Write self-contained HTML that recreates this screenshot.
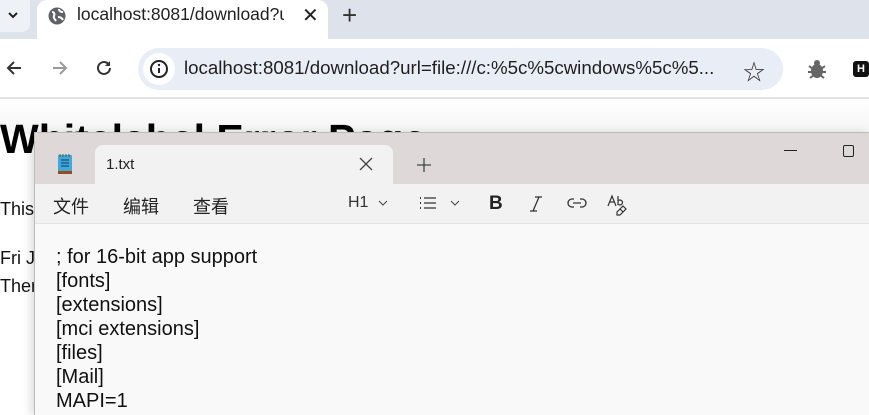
<!DOCTYPE html>
<html><head><meta charset="utf-8"><style>
*{margin:0;padding:0;box-sizing:border-box}
body{width:869px;height:415px;overflow:hidden;background:#fff;font-family:"Liberation Sans","Noto Sans CJK SC",sans-serif;position:relative}
.abs{position:absolute}
</style></head><body>
<div class="abs" style="left:0;top:0;width:869px;height:39px;background:#dee3eb"></div>
<div class="abs" style="left:0;top:0;width:30px;height:32px;background:#eef1f5;border-radius:0 0 8px 0"></div>
<svg class="abs" style="left:7px;top:9px" width="12" height="12"><path d="M2 4l4 4 4-4" stroke="#222" stroke-width="2" fill="none"/></svg>
<div class="abs" style="left:37px;top:0;width:291px;height:40px;background:#fff;border-radius:10px 10px 0 0"></div>
<svg class="abs" style="left:47px;top:6px" width="20" height="20"><circle cx="10" cy="10" r="8.5" fill="#5f6368"/><path d="M5 6c2 0 3 2 2 4s1 3 2 5M12 3c0 2 2 3 4 3M11 11c2 0 4 1 5 3" stroke="#fff" stroke-width="2" fill="none"/></svg>
<div class="abs" style="left:77px;top:4px;font-size:17.5px;color:#1f1f1f;white-space:nowrap;width:207px;overflow:hidden">localhost:8081/download?url</div>
<div class="abs" style="left:302px;top:3px;font-size:20px;color:#222">✕</div>
<div class="abs" style="left:342px;top:0px;font-size:26px;color:#333">+</div>
<svg class="abs" style="left:5px;top:59px" width="18" height="18"><path d="M16 9H3M9 3L3 9l6 6" stroke="#333" stroke-width="2" fill="none"/></svg>
<svg class="abs" style="left:51px;top:59px" width="18" height="18"><path d="M2 9h13M9 3l6 6-6 6" stroke="#999" stroke-width="2" fill="none"/></svg>
<svg class="abs" style="left:95px;top:59px" width="18" height="18"><path d="M15 9a6 6 0 1 1-2-4.5" stroke="#333" stroke-width="2" fill="none"/><path d="M15 2v5h-5z" fill="#333"/></svg>
<div class="abs" style="left:138px;top:48px;width:645px;height:42px;background:#e9eef6;border-radius:21px"></div>
<div class="abs" style="left:143px;top:53px;width:32px;height:32px;background:#fff;border-radius:16px"></div>
<svg class="abs" style="left:149px;top:59px" width="20" height="20"><circle cx="10" cy="10" r="8" stroke="#222" stroke-width="2" fill="none"/><path d="M10 9v5" stroke="#222" stroke-width="2"/><circle cx="10" cy="6" r="1.2" fill="#222"/></svg>
<div class="abs" style="left:184px;top:57px;font-size:18.7px;color:#1f1f1f;white-space:nowrap">localhost:8081/download?url=file:///c:%5c%5cwindows%5c%5...</div>
<div class="abs" style="left:743px;top:55px;font-size:22px;color:#333">☆</div>
<svg class="abs" style="left:806px;top:58px" width="22" height="22"><ellipse cx="11" cy="13" rx="6" ry="7" fill="#666"/><circle cx="11" cy="5" r="3" fill="#666"/><path d="M3 8l4 3M19 8l-4 3M2 14h5M20 14h-5M4 20l4-3M18 20l-4-3" stroke="#666" stroke-width="2"/></svg>
<div class="abs" style="left:853px;top:61px;width:16px;height:16px;background:#111;border-radius:3px;color:#fff;font-size:11px;font-weight:bold;padding-left:4px;line-height:16px">H</div>
<div class="abs" style="left:0;top:97px;width:869px;height:2px;background:#e2e2e2"></div>
<div class="abs" style="left:0;top:99px;width:869px;height:35px;background:linear-gradient(#fff,#f4f4f4)"></div>
<div class="abs" style="left:0;top:116px;font-size:41px;font-weight:bold;color:#000;white-space:nowrap">Whitelabel Error Page</div>
<div class="abs" style="left:0;top:199px;font-size:18px;color:#111">This</div>
<div class="abs" style="left:0;top:248px;font-size:18px;color:#111">Fri J</div>
<div class="abs" style="left:0;top:276px;font-size:18px;color:#111">Ther</div>
<div class="abs" style="left:34px;top:132px;width:835px;height:283px;background:#f9f9f9;border-left:1px solid #bbb;border-top:1px solid #bbb;box-shadow:-4px 0 8px rgba(0,0,0,.12)"></div>
<div class="abs" style="left:35px;top:133px;width:834px;height:51px;background:#ded8d8"></div>
<div class="abs" style="left:95px;top:145px;width:298px;height:40px;background:#f3f2f2;border-radius:8px 8px 0 0"></div>
<svg class="abs" style="left:57px;top:153px" width="16" height="22"><rect x="1" y="2" width="14" height="17" rx="1" fill="#3fa9dc"/><rect x="1" y="18" width="14" height="3" fill="#9a4b1e"/><path d="M4 7h8M4 10h8M4 13h8" stroke="#1a4f78" stroke-width="1.3"/><path d="M3 1v3M6 1v3M9 1v3M12 1v3" stroke="#555"/></svg>
<div class="abs" style="left:106px;top:156px;font-size:15px;color:#222">1.txt</div>
<svg class="abs" style="left:359px;top:157px" width="14" height="14"><path d="M1 1l12 12M13 1L1 13" stroke="#444" stroke-width="1.3"/></svg>
<svg class="abs" style="left:416px;top:157px" width="16" height="16"><path d="M8 1v14M1 8h14" stroke="#444" stroke-width="1.3"/></svg>
<div class="abs" style="left:784px;top:150px;width:13px;height:1px;background:#222"></div>
<div class="abs" style="left:843px;top:145px;width:11px;height:12px;border:1.3px solid #222;border-radius:2px"></div>
<div class="abs" style="left:35px;top:184px;width:834px;height:40px;background:#f3f2f2;border-bottom:1px solid #e3e3e3"></div>
<div class="abs" style="left:53px;top:193px;font-size:18px;color:#222">文件</div>
<div class="abs" style="left:123px;top:193px;font-size:18px;color:#222">编辑</div>
<div class="abs" style="left:193px;top:193px;font-size:18px;color:#222">查看</div>
<div class="abs" style="left:348px;top:194px;font-size:16px;color:#333">H1</div>
<svg class="abs" style="left:378px;top:199px" width="10" height="8"><path d="M1 2l4 4 4-4" stroke="#444" fill="none"/></svg>
<svg class="abs" style="left:419px;top:196px" width="20" height="14"><path d="M1 2h1M1 7h1M1 12h1" stroke="#333" stroke-width="2"/><path d="M5 2h12M5 7h12M5 12h12" stroke="#333" stroke-width="1.3"/></svg>
<svg class="abs" style="left:450px;top:199px" width="10" height="8"><path d="M1 2l4 4 4-4" stroke="#444" fill="none"/></svg>
<div class="abs" style="left:489px;top:193px;font-size:19px;font-weight:bold;color:#222">B</div>
<svg class="abs" style="left:528px;top:195px" width="16" height="18"><path d="M7 2h7M2 16h7M11 2L5 16" stroke="#333" stroke-width="1.3"/></svg>
<svg class="abs" style="left:567px;top:196px" width="20" height="14"><path d="M7 3H5a4 4 0 0 0 0 8h2M13 3h2a4 4 0 0 1 0 8h-2M6 7h8" stroke="#333" stroke-width="1.3" fill="none"/></svg>
<svg class="abs" style="left:607px;top:194px" width="22" height="22"><path d="M1 12L5 2l4 10M2.5 8h5M11 2v9M11 7a2.5 2.5 0 1 1 0 3" stroke="#333" stroke-width="1.2" fill="none"/><path d="M10 18l6-6 3 3-6 6h-3zM13 15l3 3" stroke="#333" stroke-width="1.2" fill="none"/></svg>
<div class="abs" style="left:56px;top:245px;font-size:20px;line-height:24px;color:#111;white-space:pre">; for 16-bit app support
[fonts]
[extensions]
[mci extensions]
[files]
[Mail]
MAPI=1</div>
</body></html>
